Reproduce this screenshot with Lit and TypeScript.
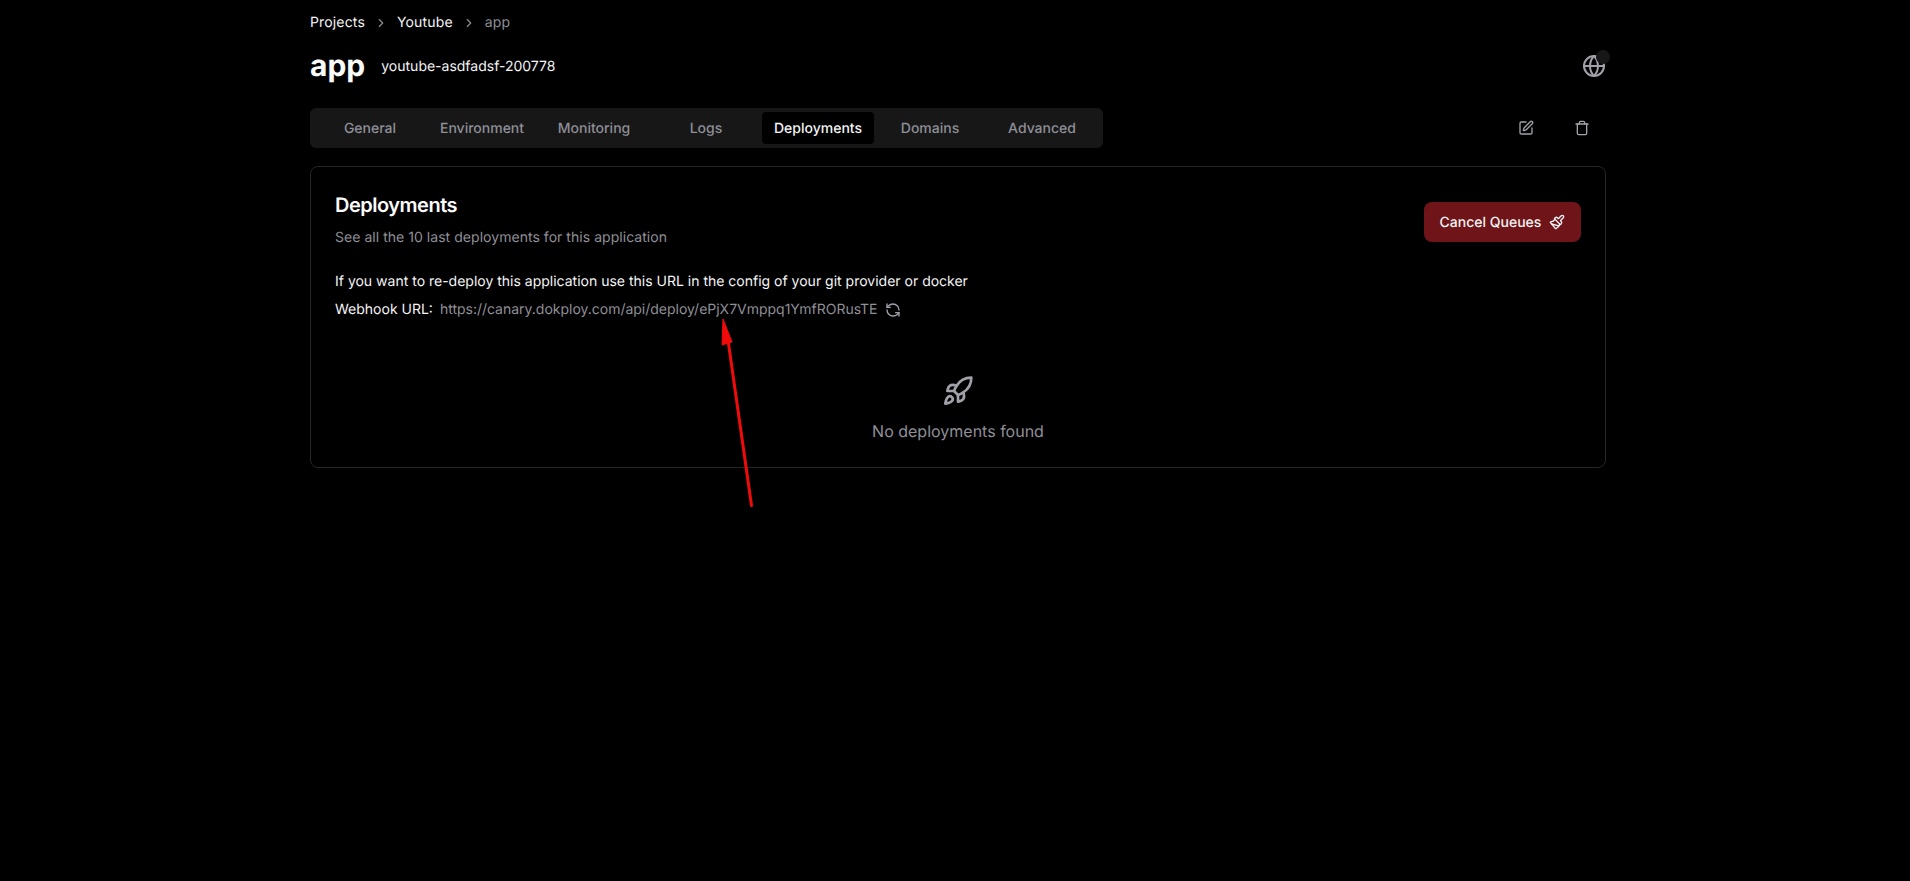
import { LitElement, html, css, svg } from "lit";
import { customElement } from "lit/decorators.js";

const ic = (size: number, body: unknown, cls = "") => html`<svg class=${cls} width=${size} height=${size} viewBox="0 0 24 24" fill="none" stroke="currentColor" stroke-width="2" stroke-linecap="round" stroke-linejoin="round">${body}</svg>`;

const chevron = svg`<path d="m9 18 6-6-6-6"/>`;
const globe = svg`<circle cx="12" cy="12" r="10"/><path d="M12 2a14.5 14.5 0 0 0 0 20 14.5 14.5 0 0 0 0-20"/><path d="M2 12h20"/>`;
const pen = svg`<path d="M12 3H5a2 2 0 0 0-2 2v14a2 2 0 0 0 2 2h14a2 2 0 0 0 2-2v-7"/><path d="M18.375 2.625a1 1 0 0 1 3 3l-9.013 9.014a2 2 0 0 1-.853.505l-2.873.84a.5.5 0 0 1-.62-.62l.84-2.873a2 2 0 0 1 .506-.852z"/>`;
const trash = svg`<path d="M3 6h18"/><path d="M19 6v14c0 1-1 2-2 2H7c-1 0-2-1-2-2V6"/><path d="M8 6V4c0-1 1-2 2-2h4c1 0 2 1 2 2v2"/>`;
const brush = svg`<path d="m14.622 17.897-10.68-2.913"/><path d="M18.376 2.622a1 1 0 1 1 3.002 3.002L17.36 9.643a.5.5 0 0 0 0 .707l.944.944a2.41 2.41 0 0 1 0 3.408l-.944.944a.5.5 0 0 1-.707 0L8.354 7.348a.5.5 0 0 1 0-.707l.944-.944a2.41 2.41 0 0 1 3.408 0l.944.944a.5.5 0 0 0 .707 0z"/><path d="M9 8c-1.804 2.71-3.97 3.46-6.583 3.948a.507.507 0 0 0-.302.819l7.32 8.883a1 1 0 0 0 1.185.204C12.735 20.405 16 16.792 16 15"/>`;
const refresh = svg`<path d="M21 12a9 9 0 0 0-9-9 9.75 9.75 0 0 0-6.74 2.74L3 8"/><path d="M3 3v5h5"/><path d="M3 12a9 9 0 0 0 9 9 9.75 9.75 0 0 0 6.74-2.74L21 16"/><path d="M16 16h5v5"/>`;
const rocket = svg`<path d="M4.5 16.5c-1.5 1.26-2 5-2 5s3.74-.5 5-2c.71-.84.7-2.13-.09-2.91a2.18 2.18 0 0 0-2.91-.09z"/><path d="m12 15-3-3a22 22 0 0 1 2-3.95A12.88 12.88 0 0 1 22 2c0 2.72-.78 7.5-6 11a22.35 22.35 0 0 1-4 2z"/><path d="M9 12H4s.55-3.03 2-4c1.62-1.08 5 0 5 0"/><path d="M12 15v5s3.03-.55 4-2c1.08-1.62 0-5 0-5"/>`;

const TABS = ["General", "Environment", "Monitoring", "Logs", "Deployments", "Domains", "Advanced"];

@customElement("app-root")
export class AppRoot extends LitElement {
  static styles = css`
    :host { display: block; height: 881px; background: #000; color: #f4f4f5; font-family: Inter, "Liberation Sans", sans-serif; font-size: 14px; position: relative; overflow: hidden; text-rendering: geometricPrecision; }
    .page { width: 1296px; margin-left: 310px; padding-top: 12px; display: flex; flex-direction: column; }
    .crumbs { display: flex; align-items: center; height: 21px; line-height: 21px; gap: 9px; letter-spacing: 0.15px; }
    .crumbs .sep { color: #8a8a92; display: flex; }
    .crumbs .cur { color: #8f8f97; }
    .head { display: flex; align-items: center; justify-content: space-between; height: 36px; margin-top: 15px; }
    .title { display: flex; align-items: center; gap: 16px; }
    .title h1 { margin: 0; font-size: 30px; line-height: 36px; font-weight: 700; color: #fafafa; }
    .globe { position: relative; display: flex; color: #a1a1aa; }
    .dot { position: absolute; width: 14px; height: 14px; border-radius: 50%; background: #171717; top: -4px; right: -4px; }
    .bar { display: flex; align-items: center; justify-content: space-between; margin-top: 24px; }
    .tabs { width: 793px; height: 40px; box-sizing: border-box; padding: 4px; background: #171717; border-radius: 6px; display: flex; color: #8f8f97; }
    .tab { width: 112px; display: flex; align-items: center; justify-content: center; border-radius: 4px; font-weight: 500; box-sizing: border-box; }
    .tab.on { background: #000; color: #f4f4f5; }
    .actions { display: flex; gap: 40px; padding-right: 16px; color: #a1a1aa; }
    .actions svg { display: block; }
    .card { margin-top: 18px; height: 302px; box-sizing: border-box; border: 1px solid #262626; border-radius: 8px; padding: 24px; }
    .chead { display: flex; justify-content: space-between; align-items: flex-start; }
    .chead h2 { margin: 0; font-size: 20px; line-height: 28px; font-weight: 600; letter-spacing: -0.5px; color: #fafafa; }
    .chead p { margin: 9px 0 0; line-height: 20px; color: #8f8f97; letter-spacing: 0.04px; }
    .btn { height: 40px; width: 157px; margin-top: 11px; border: 0; border-radius: 8px; background: #6f1418; color: #f4f4f5; font: 500 14px Inter, "Liberation Sans", sans-serif; text-rendering: geometricPrecision; display: flex; align-items: center; justify-content: center; gap: 8px; padding: 0; }
    .note { margin-top: 24px; line-height: 20px; }
    .hook { margin-top: 8px; line-height: 20px; display: flex; align-items: center; }
    .hook .lab { margin-right: 7px; }
    .hook .url { color: #8f8f97; letter-spacing: -0.01px; }
    .hook svg { margin-left: 8px; color: #a1a1aa; }
    .empty { margin-top: 55px; display: flex; flex-direction: column; align-items: center; gap: 12px; color: #8f8f97; font-size: 16px; line-height: 24px; }
    .empty svg { color: #a1a1aa; }
    .arrow { position: absolute; left: 0; top: 0; pointer-events: none; }
  `;

  render() {
    return html`
      <div class="page">
        <div class="crumbs">
          <span>Projects</span>
          <span class="sep">${ic(14, chevron)}</span>
          <span>Youtube</span>
          <span class="sep">${ic(14, chevron)}</span>
          <span class="cur">app</span>
        </div>
        <div class="head">
          <div class="title"><h1>app</h1><span>youtube-asdfadsf-200778</span></div>
          <div class="globe">${ic(24, globe)}<span class="dot"></span></div>
        </div>
        <div class="bar">
          <div class="tabs">
            ${TABS.map((t) => html`<div class="tab ${t === "Deployments" ? "on" : ""}">${t}</div>`)}
          </div>
          <div class="actions">${ic(16, pen)}${ic(16, trash)}</div>
        </div>
        <div class="card">
          <div class="chead">
            <div>
              <h2>Deployments</h2>
              <p>See all the 10 last deployments for this application</p>
            </div>
            <button class="btn">Cancel Queues ${ic(16, brush)}</button>
          </div>
          <div class="note">If you want to re-deploy this application use this URL in the config of your git provider or docker</div>
          <div class="hook">
            <span class="lab">Webhook URL:</span>
            <span class="url">https://canary.dokploy.com/api/deploy/ePjX7Vmppq1YmfRORusTE</span>
            ${ic(16, refresh)}
          </div>
          <div class="empty">${ic(32, rocket)}<span>No deployments found</span></div>
        </div>
      </div>
      <svg class="arrow" width="1910" height="881">
        <path d="M751.5 505.5 L728 340" stroke="#f00b0b" stroke-width="3" stroke-linecap="round" fill="none"/>
        <path d="M723 319 L722 345 L732 342 Z" fill="#f00b0b" stroke="#f00b0b" stroke-width="1"/>
      </svg>
    `;
  }
}
